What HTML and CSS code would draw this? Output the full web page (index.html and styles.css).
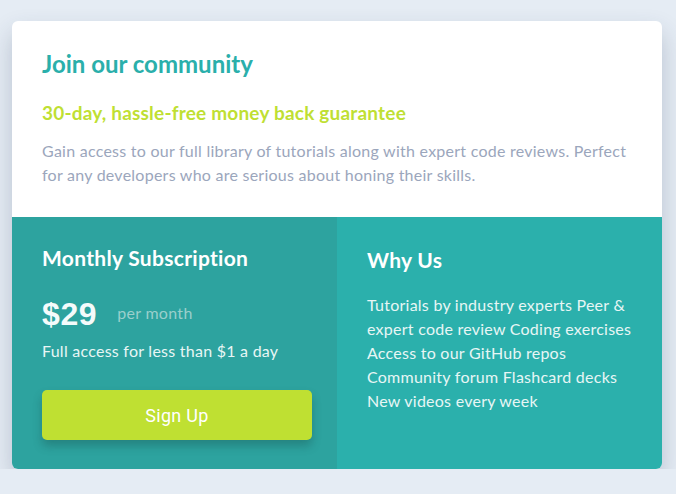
FILE: index.html
```html
<!DOCTYPE html>
<html lang="en">
<head>
<meta charset="utf-8">
<title>Single price grid</title>
<link rel="stylesheet" href="styles.css">
</head>
<body>
<main class="card">
  <section class="intro">
    <h1 class="intro-title">Join our community</h1>
    <h2 class="intro-sub">30-day, hassle-free money back guarantee</h2>
    <p class="intro-text">Gain access to our full library of tutorials along with expert code reviews. Perfect for any developers who are serious about honing their skills.</p>
  </section>
  <div class="bottom">
    <section class="sub">
      <h2 class="col-title">Monthly Subscription</h2>
      <div class="price-row"><span class="price">$29</span><span class="per">per month</span></div>
      <p class="access">Full access for less than $1 a day</p>
      <button class="signup" type="button">Sign Up</button>
    </section>
    <section class="why">
      <h2 class="col-title why-title">Why Us</h2>
      <p class="why-list">Tutorials by industry experts Peer &amp; expert code review Coding exercises Access to our GitHub repos Community forum Flashcard decks New videos every week</p>
    </section>
  </div>
</main>
</body>
</html>
```
FILE: styles.css
```css
* { box-sizing: border-box; }
html, body { margin: 0; padding: 0; }
body {
  background: #e5ecf4;
  font-family: "Lato", "Open Sans", sans-serif;
  padding: 21px 14px 0 12px;
}
.card {
  width: 650px;
  border-radius: 6px;
  overflow: hidden;
  box-shadow: 0 12px 24px rgba(40, 60, 90, 0.24);
  background: #fff;
}
.intro {
  padding: 29px 30px 30px;
  height: 196px;
}
.intro-title {
  margin: 0;
  color: #2aafab;
  font-size: 24px;
  font-weight: 700;
  line-height: 28px;
}
.intro-sub {
  margin: 24px 0 0;
  color: #bfdf33;
  font-size: 19px;
  font-weight: 700;
  line-height: 22px;
  letter-spacing: 0.2px;
}
.intro-text {
  margin: 15px 0 0;
  color: #9ba6bc;
  font-size: 16px;
  line-height: 24px;
  letter-spacing: 0.25px;
}
.bottom {
  display: grid;
  grid-template-columns: 325px 325px;
  height: 252px;
}
.sub {
  background: #2da39f;
  padding: 30px 25px 0 30px;
  color: #fff;
}
.why {
  background: #2bb0ac;
  padding: 30px 30px 0 30px;
  color: #fff;
}
.col-title {
  margin: 0;
  font-size: 21px;
  font-weight: 700;
  line-height: 22px;
  letter-spacing: 0.3px;
}
.why-title { margin-top: 2px; }
.price-row {
  display: flex;
  align-items: center;
  margin-top: 29px;
  height: 32px;
}
.price {
  font-family: "Liberation Sans", Arial, sans-serif;
  font-weight: 700;
  font-size: 32px;
  letter-spacing: 0.6px;
  color: #f4fbfb;
}
.per {
  margin-left: 20px;
  color: #9acfcc;
  font-size: 16px;
  letter-spacing: 0.3px;
  margin-top: -4px;
}
.access {
  margin: 10px 0 0;
  font-size: 16px;
  line-height: 22px;
  letter-spacing: 0.25px;
  color: #e8f6f5;
}
.signup {
  display: block;
  margin-top: 28px;
  width: 270px;
  height: 50px;
  border: none;
  border-radius: 5px;
  background: #bfe032;
  color: #fff;
  font-family: Roboto, sans-serif;
  font-size: 18px;
  letter-spacing: 0.3px;
  box-shadow: 0 6px 10px rgba(20, 60, 60, 0.3);
}
.why-list {
  margin: 22px 0 0;
  font-size: 16px;
  line-height: 24px;
  letter-spacing: 0.25px;
  color: #e7f6f5;
}
```
